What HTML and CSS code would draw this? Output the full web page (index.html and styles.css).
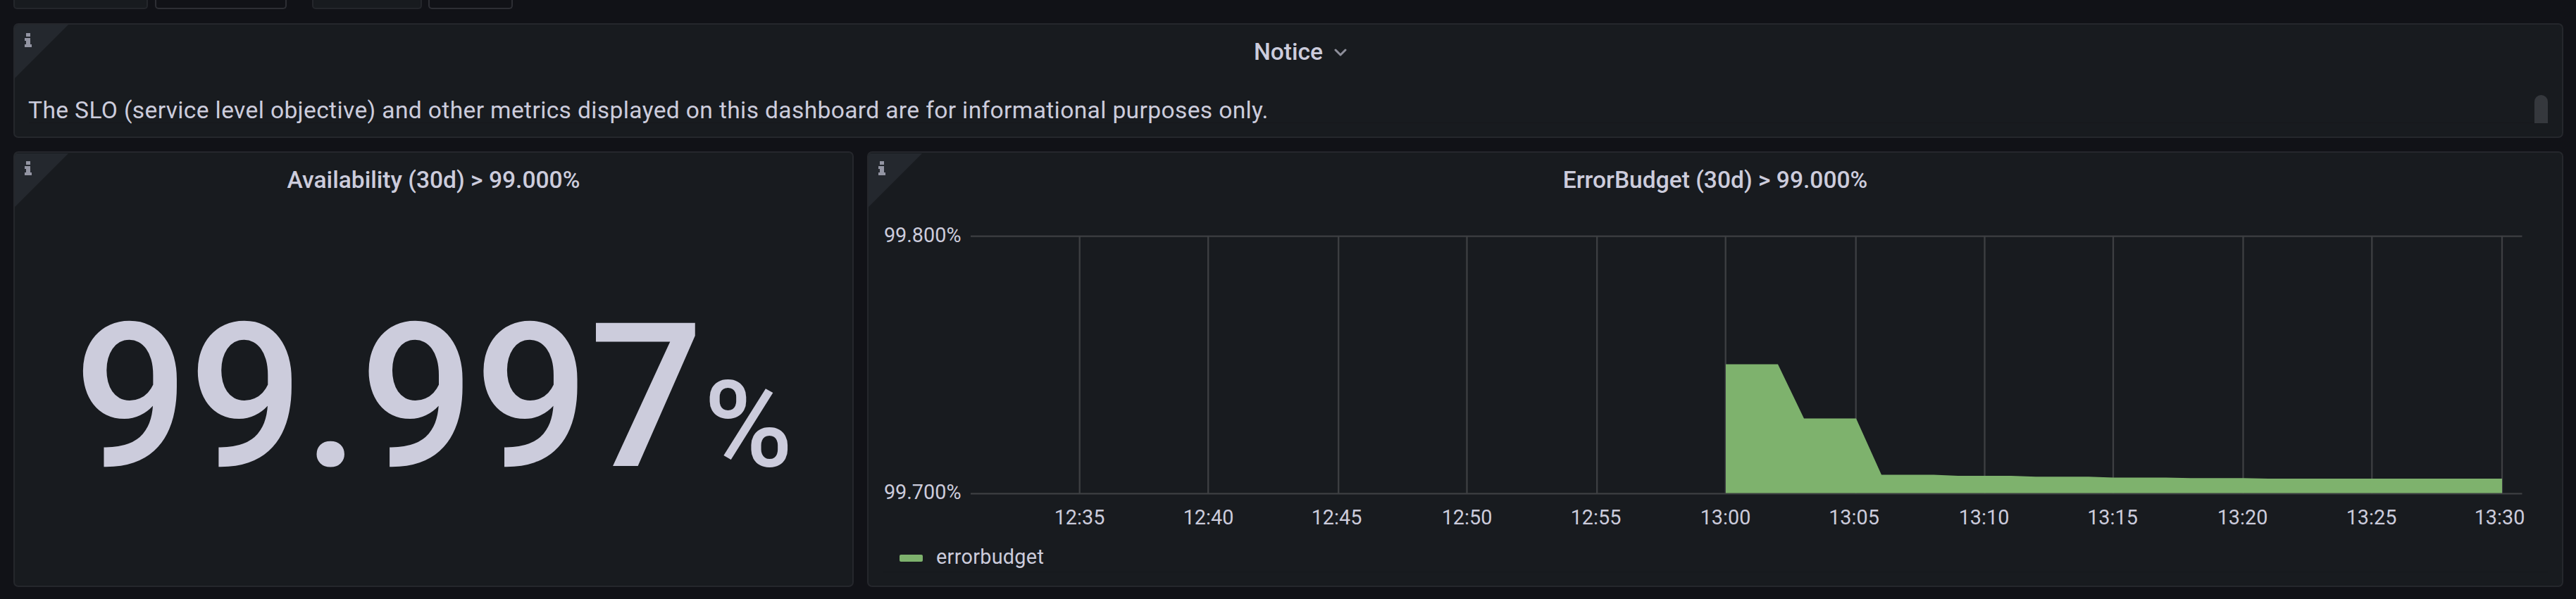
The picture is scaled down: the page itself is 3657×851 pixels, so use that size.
FILE: index.html
```
<!DOCTYPE html>
<html lang="en">
<head>
<meta charset="utf-8">
<title>SLO dashboard</title>
<link rel="stylesheet" href="styles.css">
</head>
<body>
<div class="dashboard">
  <div class="variables">
    <div class="variable"><div class="variable-label label-a"></div><div class="variable-value value-a"></div></div>
    <div class="variable"><div class="variable-label label-b"></div><div class="variable-value value-b"></div></div>
  </div>

  <section class="panel notice">
    <div class="corner"><svg class="info" viewBox="0 0 10 20"><path d="M2 0h6v5H2zM0 7h8v9h2v4H0v-4h2v-5H0z"/></svg></div>
    <header class="panel-title"><span class="title-notice">Notice</span><svg class="chevron" viewBox="0 0 18 12"><path d="M2 2l7 7 7-7"/></svg></header>
    <div class="notice-body">
      <p class="notice-text">The SLO (service level objective) and other metrics displayed on this dashboard are for informational purposes only.</p>
      <div class="scroll-thumb"></div>
    </div>
  </section>

  <div class="row">
    <section class="panel stat">
      <div class="corner low"><svg class="info" viewBox="0 0 10 20"><path d="M2 0h6v5H2zM0 7h8v9h2v4H0v-4h2v-5H0z"/></svg></div>
      <header class="panel-title"><span class="title-stat">Availability (30d) &gt; 99.000%</span></header>
      <div class="stat-value"><span class="number">99.997</span><span class="unit">%</span></div>
    </section>

    <section class="panel graph">
      <div class="corner low"><svg class="info" viewBox="0 0 10 20"><path d="M2 0h6v5H2zM0 7h8v9h2v4H0v-4h2v-5H0z"/></svg></div>
      <header class="panel-title"><span class="title-graph">ErrorBudget (30d) &gt; 99.000%</span></header>
      <svg class="plot" viewBox="1233 285 2404 475">
        <path class="grid" d="M1378 335.7H3580.5M1378 701.4H3580.5M1532.7 335V701M1715.2 335V701M1900.2 335V701M2082.5 335V701M2267.2 335V701M2449.7 335V701M2634.7 335V701M2817.5 335V701M3000 335V701M3184.5 335V701M3367.3 335V701M3552 335V701"/>
        <path class="area" d="M2450 700.5V517.5H2524L2561 594.5H2635L2671 674.5H2745L2780 676H2855L2890 677.3H2965L3000 678.5H3075L3110 679.3H3185L3220 680H3552V700.5Z"/>
        <g class="axis y-axis"><text x="1364.5" y="344">99.800%</text><text x="1364.5" y="709">99.700%</text></g>
        <g class="axis x-axis">
          <text x="1532.5" y="745">12:35</text><text x="1715.5" y="745">12:40</text><text x="1897.5" y="745">12:45</text><text x="2082.5" y="745">12:50</text><text x="2265.5" y="745">12:55</text><text x="2449.5" y="745">13:00</text><text x="2632" y="745">13:05</text><text x="2816.5" y="745">13:10</text><text x="2999" y="745">13:15</text><text x="3183.5" y="745">13:20</text><text x="3366.5" y="745">13:25</text><text x="3548.5" y="745">13:30</text>
        </g>
      </svg>
      <div class="legend"><span class="swatch"></span><span class="legend-label">errorbudget</span></div>
    </section>
  </div>
</div>
</body>
</html>
```
FILE: styles.css
```
* { box-sizing: border-box; }
body {
  margin: 0;
  background: #111217;
  color: #ccccdc;
  font-family: Roboto, "Liberation Sans", sans-serif;
}
.dashboard {
  width: 3657px;
  height: 851px;
  padding: 0 18px 0 19px;
  overflow: hidden;
}
.variables { display: flex; gap: 36px; height: 13px; margin-bottom: 20px; }
.variable { display: flex; gap: 10px; }
.variable-label, .variable-value {
  height: 13px;
  border: 2px solid #24262b;
  border-top: 0;
  border-radius: 0 0 5px 5px;
}
.variable-label { background: #181b1f; }
.variable-value { background: #111217; border-color: #2d2e34; }
.label-a { width: 191px; }
.value-a { width: 187px; }
.label-b { width: 156px; }
.value-b { width: 120px; }
.variable:last-child { gap: 9px; }

.panel {
  position: relative;
  display: flex;
  flex-direction: column;
  background: #181b1f;
  border: 2px solid #25272c;
  border-radius: 7px;
  overflow: hidden;
}
.notice { height: 163px; margin-bottom: 19px; }
.row { display: flex; gap: 19px; height: 619px; }
.stat { width: 1193px; }
.graph { width: 2408px; }

.corner {
  position: absolute;
  top: 0;
  left: 0;
  width: 76px;
  height: 76px;
  padding: 12px 0 0 14px;
  background: #24282e;
  clip-path: polygon(0 0, 100% 0, 0 100%);
}
.corner.low { top: 1px; padding-top: 11px; }
.info { display: block; width: 10px; height: 20px; fill: #9395a3; }

.panel-title {
  display: flex;
  align-items: center;
  justify-content: center;
  height: 76px;
  flex: none;
  font-size: 33.6px;
  font-weight: 500;
  white-space: nowrap;
}
/* the negative margin keeps the title text itself centred */
.chevron {
  width: 18px;
  height: 12px;
  margin: 4px -34px 0 16px;
  fill: none;
  stroke: #8e8f9b;
  stroke-width: 3;
  stroke-linecap: round;
  stroke-linejoin: round;
}
.notice-body {
  display: flex;
  justify-content: space-between;
  margin: 0 20px;
  height: 64px;
  border-bottom: 1px solid #16181c;
}
.notice-text {
  margin: 0 0 0 -1px;
  height: 63px;
  font-size: 33.6px;
  letter-spacing: 0.36px;
  line-height: 91px;
  white-space: nowrap;
}
.scroll-thumb { width: 19px; height: 40px; margin-top: 24px; background: #35383d; border-radius: 10px 10px 0 0; }

.stat-value {
  display: flex;
  align-items: baseline;
  justify-content: center;
  font-weight: 500;
  font-size: 286px;
  letter-spacing: 0.36px;
  line-height: 334px;
  margin-top: 105px;
}
.unit { font-size: 171.6px; }

.plot { display: block; width: 2404px; height: 475px; margin-top: -8px; flex: none; }
.grid { fill: none; stroke: #3d3f42; stroke-width: 2.3; }
.area { fill: #7eb26d; }
.axis { fill: #ccccdc; font-size: 28.8px; }
.y-axis { text-anchor: end; }
.x-axis { text-anchor: middle; }
.legend {
  display: flex;
  align-items: center;
  height: 53px;
  margin: 0 20px;
  padding-left: 24px;
  border-bottom: 1px solid #16181c;
}
.swatch { width: 33px; height: 10px; margin-top: 14px; border-radius: 2px; background: #7eb26d; }
.legend-label { margin-left: 19px; margin-top: 10px; font-size: 28.8px; letter-spacing: 0.3px; line-height: 40px; }
```
